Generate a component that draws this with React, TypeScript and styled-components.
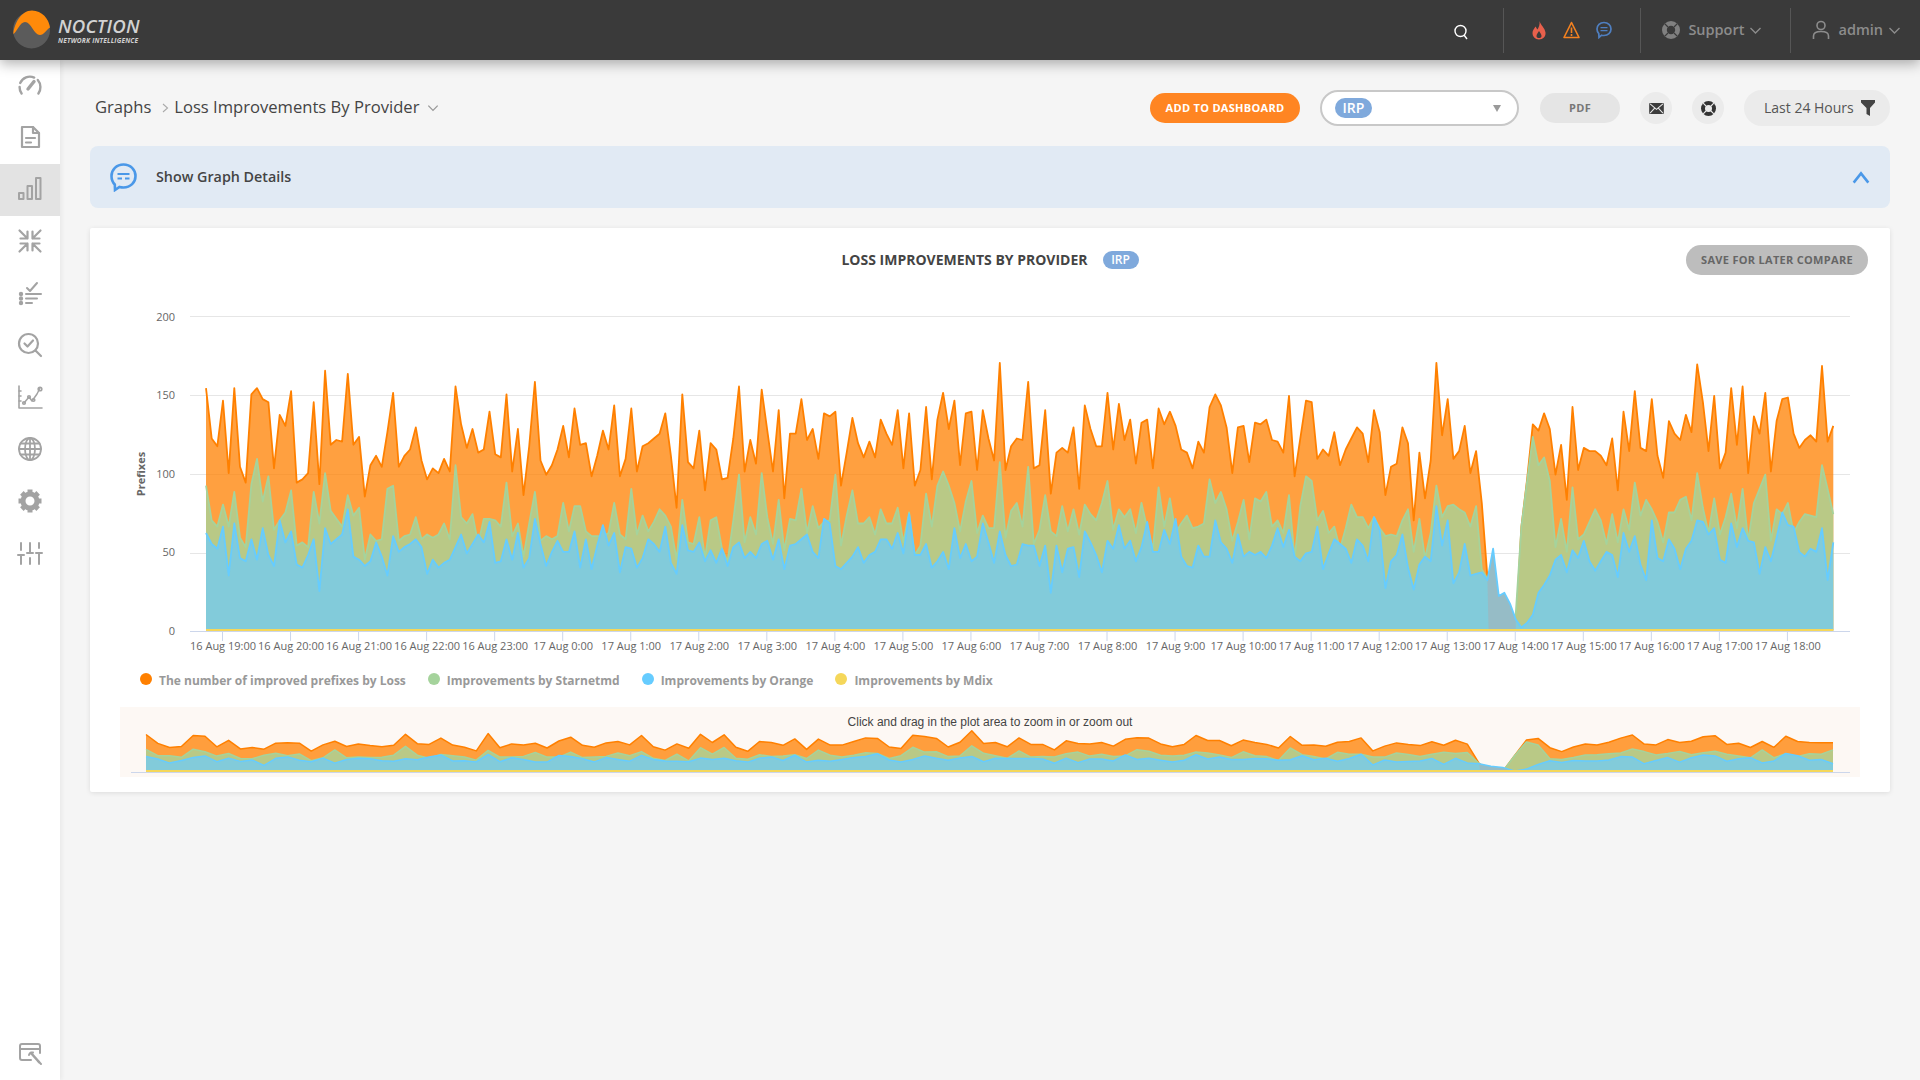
import React from 'react';
import styled, { createGlobalStyle } from 'styled-components';

const GlobalStyle = createGlobalStyle`
  html, body { margin: 0; padding: 0; background: #f5f5f5; }
  body { font-family: "Open Sans", "Liberation Sans", sans-serif; color: #444; }
  * { box-sizing: border-box; }
`;

// chart data, one value per 5 minutes
const lossData = [
  154,122,117,146,100,154,104,94,150,154,147,145,103,137,130,152,94,96,100,145,
  93,165,118,121,120,163,118,123,85,105,111,104,126,151,104,111,115,129,108,96,
  103,100,109,101,155,131,116,128,113,115,139,112,110,150,101,128,86,117,158,108,
  99,105,115,130,110,141,118,119,98,111,127,115,143,98,109,141,101,117,119,122,
  125,138,111,78,150,107,103,127,89,119,115,
  96,97,122,155,101,121,106,153,127,101,140,84,125,125,147,121,128,109,138,136,
  139,92,113,135,119,110,120,110,134,125,118,140,103,138,92,102,142,96,134,151,
  128,146,105,138,139,102,140,122,108,170,102,117,122,121,158,103,105,140,87,113,
  116,113,129,90,143,128,117,117,151,115,144,121,134,106,132,134,103,141,131,139,
  130,115,113,103,120,113,142,150,143,129,100,129,130,107,132,131,134,121,120,113,
  149,98,122,146,145,109,
  115,111,126,105,115,122,129,125,107,140,126,86,104,106,129,119,70,113,84,108,
  170,124,147,109,114,130,100,114,81,34,0,0,0,0,0,66,96,131,127,138,
  128,99,118,83,142,102,116,114,114,111,105,122,89,139,114,152,116,114,147,111,
  97,133,125,121,137,126,169,145,114,149,103,113,154,118,155,100,136,125,151,101,
  133,147,148,125,116,121,124,120,168,120,130,
];
const starnetData = [
  92,70,66,80,66,88,59,53,93,109,82,98,64,70,75,89,54,56,53,88,
  68,100,76,71,66,86,73,78,45,61,57,58,90,92,57,60,61,72,58,61,
  59,61,68,58,105,72,68,74,55,71,71,70,66,94,60,68,47,68,88,57,
  60,58,60,81,63,79,79,63,60,60,60,62,81,61,58,90,61,73,63,69,
  77,73,66,45,83,56,55,72,46,70,72,
  52,44,70,99,56,72,61,100,72,55,83,51,71,70,90,62,79,65,69,70,
  99,54,73,89,68,68,72,61,77,68,68,78,56,75,48,54,87,66,92,101,
  92,81,63,82,95,62,73,65,65,107,59,76,81,66,104,55,64,86,63,60,
  79,63,77,61,80,74,70,81,95,64,77,72,77,62,81,65,52,91,66,84,
  62,68,73,65,66,68,96,81,88,77,57,69,83,58,84,82,88,66,70,62,
  86,46,79,98,95,70,
  76,62,66,52,65,80,72,72,65,72,65,60,61,60,70,77,50,71,46,62,
  92,72,79,80,77,75,66,79,39,33,0,0,0,0,11,66,95,123,105,110,
  95,53,71,50,91,58,61,69,77,70,55,74,56,77,64,94,73,83,77,69,
  56,75,75,83,85,70,100,78,62,84,61,72,87,65,90,57,81,90,99,57,
  77,74,81,62,69,74,73,72,105,90,74,
];
const orangeData = [
  62,55,52,66,35,68,46,44,58,45,65,48,41,70,56,63,42,40,48,58,
  25,65,55,58,61,77,47,45,41,44,56,47,35,60,50,53,55,58,53,36,
  45,40,43,45,53,61,49,55,61,56,69,43,44,58,45,62,40,46,71,55,
  41,50,57,50,50,63,40,58,39,54,67,54,62,37,53,52,40,46,58,55,
  50,66,43,36,67,51,50,56,44,51,43,
  52,41,53,56,46,50,46,55,57,45,58,39,54,55,58,61,50,46,71,68,
  41,39,43,47,53,43,48,50,58,58,52,62,49,74,48,48,55,40,44,50,
  39,65,46,55,44,47,68,56,43,63,48,41,42,55,54,54,41,54,24,54,
  37,52,53,34,63,56,48,37,57,52,67,52,57,44,53,69,50,50,64,55,
  71,47,41,40,54,47,47,70,56,52,43,61,47,50,48,50,46,54,65,53,
  64,47,44,49,50,66,
  39,49,58,55,52,43,58,54,44,72,64,27,44,48,61,40,26,42,47,44,
  79,54,70,30,37,55,35,36,37,32,52,22,24,17,7,2,5,10,24,29,
  35,45,48,37,51,46,57,44,38,44,50,48,34,62,50,60,42,32,70,46,
  44,58,52,39,52,57,70,69,61,65,45,43,68,53,65,57,56,36,53,44,
  59,75,67,66,50,47,52,50,65,32,56,
];

const hourLabels = [
  '16 Aug 19:00','16 Aug 20:00','16 Aug 21:00','16 Aug 22:00','16 Aug 23:00','17 Aug 0:00','17 Aug 1:00','17 Aug 2:00',
  '17 Aug 3:00','17 Aug 4:00','17 Aug 5:00','17 Aug 6:00','17 Aug 7:00','17 Aug 8:00','17 Aug 9:00','17 Aug 10:00',
  '17 Aug 11:00','17 Aug 12:00','17 Aug 13:00','17 Aug 14:00','17 Aug 15:00','17 Aug 16:00','17 Aug 17:00','17 Aug 18:00',
];

const legendItems = [
  { label: 'The number of improved prefixes by Loss', color: '#ff8000' },
  { label: 'Improvements by Starnetmd', color: '#a5d39c' },
  { label: 'Improvements by Orange', color: '#66ccff' },
  { label: 'Improvements by Mdix', color: '#f5d75a' },
];

const line = (vals: number[], xf: (i: number) => number, yf: (v: number) => number) =>
  vals.map((v, i) => `${i === 0 ? 'M' : 'L'}${xf(i).toFixed(1)} ${yf(v).toFixed(1)}`).join(' ');

const area = (vals: number[], xf: (i: number) => number, yf: (v: number) => number) =>
  `${line(vals, xf, yf)} L${xf(vals.length - 1).toFixed(1)} ${yf(0)} L${xf(0).toFixed(1)} ${yf(0)} Z`;

// the navigator only shows every second point
const thin = (vals: number[]) => vals.filter((_, i) => i % 2 === 0);

function Series({ xf, yf, loss, starnet, orange, stroke, step }: {
  xf: (i: number) => number;
  yf: (v: number) => number;
  loss: number[];
  starnet: number[];
  orange: number[];
  stroke: number;
  step: number;
}) {
  // the part of the Orange series where nothing lies under it comes out greyer
  const from = Math.floor(226 / step);
  const to = Math.ceil(231 / step);
  const notch = [`M${xf(from + 0.2 / step).toFixed(1)} ${yf(0)}`, `L${xf(from).toFixed(1)} ${yf(orange[from])}`];
  for (let i = from + 1; i <= to; i++) notch.push(`L${xf(i).toFixed(1)} ${yf(orange[i])}`);
  notch.push(`L${xf(to).toFixed(1)} ${yf(0)} Z`);
  return (
    <g strokeLinejoin="round">
      <path d={area(loss, xf, yf)} fill="#ff8000" fillOpacity={0.75} />
      <path d={line(loss, xf, yf)} fill="none" stroke="#ff8000" strokeWidth={stroke} />
      <path d={area(starnet, xf, yf)} fill="#b9c986" />
      <path d={line(starnet, xf, yf)} fill="none" stroke="#a5d39c" strokeWidth={stroke} />
      <path d={area(orange, xf, yf)} fill="#82cbda" />
      <path d={notch.join(' ')} fill="#96bcc6" />
      <path d={line(orange, xf, yf)} fill="none" stroke="#66ccff" strokeWidth={stroke} />
      <path d={`M${xf(0)} ${yf(0) - 0.5} L${xf(loss.length - 1)} ${yf(0) - 0.5}`} stroke="#f5d75a" strokeWidth={2} />
    </g>
  );
}

const Page = styled.div`
  display: flex;
  flex-direction: column;
  width: 100%;
  height: 1080px;
  overflow: hidden;
`;

const TopBar = styled.header`
  position: relative;
  z-index: 2;
  flex: 0 0 60px;
  display: flex;
  align-items: center;
  padding-left: 13px;
  background: #3a3a3a;
  box-shadow: 0 4px 12px rgba(0, 0, 0, 0.3);
`;

const LogoText = styled.div`
  display: flex;
  flex-direction: column;
  margin-left: 7px;
  font-style: italic;
  color: #d2d2d2;
`;

const LogoName = styled.span`
  font-size: 18.6px;
  line-height: 20px;
  font-weight: 600;
  letter-spacing: 0.2px;
`;

const LogoSub = styled.span`
  font-size: 6.6px;
  line-height: 9px;
  font-weight: 700;
  letter-spacing: 0.2px;
  white-space: nowrap;
`;

const TopRight = styled.div`
  margin-left: auto;
  display: flex;
  align-items: center;
  height: 100%;
`;

const SearchSlot = styled.div`
  display: flex;
  align-items: center;
  padding-top: 4px;
  margin-right: 34px;
`;

const TopDivider = styled.div`
  width: 1px;
  height: 45px;
  background: #565656;
`;

const AlertGroup = styled.div`
  display: flex;
  align-items: center;
  gap: 16px;
  padding: 0 28px 0 27px;
`;

const TopMenu = styled.div<{ $end: number }>`
  display: flex;
  align-items: center;
  padding: 0 ${p => p.$end}px 0 21px;
  color: #8c8c8c;
  font-size: 14.5px;
  font-weight: 600;
`;

const TopMenuLabel = styled.span`
  margin: 0 4px 2px 8px;
`;

const Body = styled.div`
  flex: 1;
  display: flex;
  min-height: 0;
`;

const SideNav = styled.nav`
  flex: 0 0 60px;
  display: flex;
  flex-direction: column;
  background: #fff;
  box-shadow: 2px 0 4px rgba(0, 0, 0, 0.05);
`;

const SideItem = styled.div<{ $active?: boolean; $bottom?: boolean }>`
  flex: 0 0 52px;
  display: flex;
  align-items: center;
  justify-content: center;
  padding-bottom: 2px;
  color: #a3a3a3;
  background: ${p => (p.$active ? '#e3e3e3' : 'transparent')};
  margin-top: ${p => (p.$bottom ? 'auto' : '0')};
`;

const Main = styled.main`
  flex: 1;
  min-width: 0;
  padding: 30px 30px 0;
`;

const ToolRow = styled.div`
  display: flex;
  align-items: center;
  height: 36px;
`;

const Crumbs = styled.div`
  display: flex;
  align-items: center;
  margin-left: 5px;
  margin-right: auto;
  padding-bottom: 4px;
  font-size: 16.6px;
  color: #444;
`;

const CrumbArrow = styled.span`
  display: flex;
  margin: 3px 3px 0 8px;
  color: #aaa;
`;

const CrumbDown = styled.span`
  display: flex;
  margin: 4px 0 0 7px;
  color: #999;
`;

const AddButton = styled.button`
  width: 150px;
  height: 30px;
  padding: 0 0 2px;
  border: 0;
  border-radius: 15px;
  background: #ff8522;
  color: #fff;
  font: 700 11px "Open Sans", sans-serif;
  letter-spacing: 0.3px;
`;

const SelectBox = styled.div`
  position: relative;
  width: 199px;
  height: 36px;
  margin-left: 20px;
  display: flex;
  align-items: center;
  padding-left: 13px;
  background: #fff;
  border: 2px solid #c8c8c8;
  border-radius: 18px;
`;

const IrpBadge = styled.span<{ $small?: boolean }>`
  display: inline-flex;
  align-items: center;
  justify-content: center;
  width: ${p => (p.$small ? '36px' : '37px')};
  height: ${p => (p.$small ? '18px' : '20px')};
  padding-bottom: 1px;
  border-radius: 10px;
  background: #7fa9dc;
  color: #fff;
  font-size: ${p => (p.$small ? '12px' : '14px')};
  font-weight: 600;
`;

const SelectCaret = styled.span`
  margin-left: auto;
  margin-right: 16px;
  width: 0;
  height: 0;
  border-left: 4px solid transparent;
  border-right: 4px solid transparent;
  border-top: 7px solid #9a9a9a;
`;

const PdfButton = styled.button`
  width: 80px;
  height: 30px;
  margin-left: 21px;
  padding: 0 0 2px;
  border: 0;
  border-radius: 15px;
  background: #e5e5e5;
  color: #777;
  font: 700 11px "Open Sans", sans-serif;
  letter-spacing: 0.3px;
`;

const RoundButton = styled.div`
  display: flex;
  align-items: center;
  justify-content: center;
  width: 32px;
  height: 32px;
  margin-left: 20px;
  border-radius: 50%;
  background: #ebebeb;
`;

const RangeButton = styled.div`
  display: flex;
  align-items: center;
  justify-content: space-between;
  width: 146px;
  height: 36px;
  margin-left: 20px;
  padding: 0 15px 0 20px;
  border-radius: 18px;
  background: #ebebeb;
  color: #555;
  font-size: 14px;
`;

const RangeLabel = styled.span`
  margin-bottom: 2px;
`;

const Banner = styled.div`
  display: flex;
  align-items: center;
  height: 62px;
  margin-top: 20px;
  padding: 0 20px;
  border-radius: 8px;
  background: #e1eaf4;
`;

const BannerText = styled.span`
  margin: 0 0 2px 19px;
  font-size: 14.3px;
  font-weight: 600;
  color: #444;
`;

const BannerChevron = styled.span`
  display: flex;
  margin: 1px -2px 0 auto;
  color: #4a98e8;
`;

const Card = styled.section`
  height: 564px;
  margin-top: 20px;
  padding-top: 17px;
  background: #fff;
  border-radius: 2px;
  box-shadow: 0 1px 5px rgba(0, 0, 0, 0.1);
`;

const CardHead = styled.div`
  display: grid;
  grid-template-columns: 1fr auto 1fr;
  align-items: center;
  height: 30px;
  padding: 0 22px;
`;

const CardTitle = styled.div`
  grid-column: 2;
  display: flex;
  align-items: center;
  gap: 15px;
  font-size: 14px;
  font-weight: 700;
  color: #444;
`;

const TitleText = styled.span`
  margin-bottom: 2px;
`;

const SaveButton = styled.button`
  justify-self: end;
  width: 182px;
  height: 30px;
  padding: 0 0 2px;
  border: 0;
  border-radius: 15px;
  background: #bdbdbd;
  color: #666;
  font: 700 11px "Open Sans", sans-serif;
  letter-spacing: 0.3px;
`;

const ChartSvg = styled.svg`
  display: block;
  width: 1800px;
  height: 385px;
  font-family: "Open Sans", sans-serif;
`;

const Legend = styled.div`
  display: flex;
  align-items: center;
  gap: 22px;
  height: 40px;
  padding-left: 50px;
`;

const LegendItem = styled.div`
  display: flex;
  align-items: center;
  gap: 7px;
  font-size: 12px;
  font-weight: 700;
  color: #999;
`;

const LegendDot = styled.span<{ $color: string }>`
  width: 12px;
  height: 12px;
  margin-top: -2px;
  border-radius: 50%;
  background: ${p => p.$color};
`;

const Navigator = styled.div`
  height: 70px;
  margin: 7px 30px 0;
  background: #fdf8f4;
`;

const NavSvg = styled.svg`
  display: block;
  width: 1740px;
  height: 70px;
`;

type IconProps = { size?: number };

const Ico = ({ size = 26, children, sw = 2 }: { size?: number; children: React.ReactNode; sw?: number }) => (
  <svg width={size} height={size} viewBox="0 0 26 26" fill="none" stroke="currentColor" strokeWidth={sw} strokeLinecap="round" strokeLinejoin="round">
    {children}
  </svg>
);

const GaugeIcon = () => (
  <Ico sw={2.4}>
    <path d="M4.6 21.5 A10.5 10.5 0 0 1 2.6 15" />
    <path d="M3.2 11 A10.5 10.5 0 0 1 17.2 5.6" />
    <path d="M20.8 8 A10.5 10.5 0 0 1 23.4 15 A10.5 10.5 0 0 1 21.4 21.5" />
    <path d="M11 17 L17 9.5" strokeWidth={3.4} />
  </Ico>
);
const DocIcon = () => (
  <Ico sw={2.2}>
    <path d="M5 3 H16 L22 9 V23 H5 Z" />
    <path d="M16 3 V9 H22" />
    <path d="M9 14 H18 M9 18.5 H14" />
  </Ico>
);
const BarsIcon = () => (
  <Ico>
    <rect x="2" y="17" width="4.5" height="6" />
    <rect x="10.5" y="10" width="4.5" height="13" />
    <rect x="19" y="2" width="4.5" height="21" />
  </Ico>
);
const CompressIcon = () => (
  <Ico sw={2.2}>
    <path d="M2.5 2.5 L10.5 10.5 M10.5 3.5 V10.5 H3.5" />
    <path d="M23.5 2.5 L15.5 10.5 M15.5 3.5 V10.5 H22.5" />
    <path d="M2.5 23.5 L10.5 15.5 M10.5 22.5 V15.5 H3.5" />
    <path d="M23.5 23.5 L15.5 15.5 M15.5 22.5 V15.5 H22.5" />
  </Ico>
);
const ListCheckIcon = () => (
  <Ico sw={2}>
    <path d="M10 8 L13 11 L20 3" />
    <path d="M9 14 H24 M9 18.5 H20 M9 23 H15" />
    <circle cx="4" cy="14" r="1.2" fill="currentColor" />
    <circle cx="4" cy="18.5" r="1.2" fill="currentColor" />
    <circle cx="4" cy="23" r="1.2" fill="currentColor" />
  </Ico>
);
const SearchCheckIcon = () => (
  <Ico sw={2.2}>
    <circle cx="11.5" cy="11.5" r="9.5" />
    <path d="M7.5 11.5 L10.5 14.5 L16 8.5" />
    <path d="M18.5 18.5 L24 24" />
  </Ico>
);
const LineChartIcon = () => (
  <Ico sw={1.6}>
    <path d="M2 2 V24 H25" />
    <path d="M2 7 H4 M2 12 H4 M2 17 H4" />
    <path d="M7 19 L12 13 L15 17 L20 10 L23 4" strokeWidth={1.5} />
    <circle cx="7" cy="19" r="1.3" />
    <circle cx="12" cy="13" r="1.3" />
    <circle cx="16.5" cy="16" r="1.3" />
    <circle cx="23" cy="5" r="1.8" />
  </Ico>
);
const GlobeIcon = () => (
  <Ico sw={1.8}>
    <circle cx="13" cy="13" r="11" />
    <ellipse cx="13" cy="13" rx="5" ry="11" />
    <path d="M13 2 V24 M2 13 H24 M3.5 7.5 H22.5 M3.5 18.5 H22.5" />
  </Ico>
);
const GearIcon = () => (
  <Ico sw={5}>
    <circle cx="13" cy="13" r="7" />
    {[0, 45, 90, 135, 180, 225, 270, 315].map(a => (
      <rect key={a} x="10.5" y="1.5" width="5" height="4" fill="currentColor" stroke="none" transform={`rotate(${a} 13 13)`} />
    ))}
  </Ico>
);
const SlidersIcon = () => (
  <Ico sw={2}>
    <path d="M4 3 V10 M4 15 V24 M13 3 V13 M13 18 V24 M22 3 V8 M22 13 V24" />
    <path d="M1 15 H7 M10 13 H16 M19 13 H25" />
  </Ico>
);
const ToolWindowIcon = () => (
  <Ico sw={2}>
    <path d="M14 20 H5 Q3 20 3 18 V6 Q3 4 5 4 H21 Q23 4 23 6 V13" />
    <path d="M3 9 H23" />
    <path d="M14 13 L22 22" strokeWidth={2.6} />
    <path d="M12 15 Q13 12 16 12.5 M21 21 L24 24" />
  </Ico>
);

const Chev = ({ size = 12, dir = 'down', sw = 1.1 }: IconProps & { dir?: 'down' | 'up' | 'right'; sw?: number }) => {
  const d = dir === 'down' ? 'M2 4 L6 8 L10 4' : dir === 'up' ? 'M2 8.5 L6 3.5 L10 8.5' : 'M4 2 L8.5 6 L4 10';
  return (
    <svg width={size} height={size} viewBox="0 0 12 12" fill="none" stroke="currentColor" strokeWidth={sw}>
      <path d={d} />
    </svg>
  );
};

const Lifesaver = ({ size, color, hole }: { size: number; color: string; hole: string }) => (
  <svg width={size} height={size} viewBox="0 0 18 18">
    <circle cx="9" cy="9" r="9" fill={color} />
    <circle cx="9" cy="9" r="4.2" fill={hole} />
    <path d="M2.6 2.6 L6 6 M15.4 2.6 L12 6 M2.6 15.4 L6 12 M15.4 15.4 L12 12" stroke={hole} strokeWidth="1.3" />
  </svg>
);

function App() {
  const chartX = (i: number) => 206 + 5.67 * i;
  const chartY = (v: number) => 630.6 - v * 1.575;
  const navLoss = thin(lossData);
  const navStarnet = thin(starnetData);
  const navOrange = thin(orangeData);
  const navX = (i: number) => 146 + (1687 / (navLoss.length - 1)) * i;
  const navY = (v: number) => 771.5 - v * 0.24;

  return (
    <Page>
      <GlobalStyle />
      <TopBar>
        <svg width="38" height="40" viewBox="0 0 38 40">
          <circle cx="18.5" cy="20" r="18.5" fill="#5b5b5b" />
          <path d="M0.3 24 C1 14 8 0.4 19 0.4 C29 0.4 36 9 37 17.5 C33 20 31 25 27 25 C21 25 18 12 12 12 C7 12 4 22 0.3 24 Z" fill="#ff8a0a" />
        </svg>
        <LogoText>
          <LogoName>NOCTION</LogoName>
          <LogoSub>NETWORK INTELLIGENCE</LogoSub>
        </LogoText>
        <TopRight>
          <SearchSlot>
            <svg width="16" height="16" viewBox="0 0 16 16" fill="none" stroke="#fff" strokeWidth="1.4">
              <circle cx="7.5" cy="7" r="5.5" />
              <path d="M11 11 L14 15" />
            </svg>
          </SearchSlot>
          <TopDivider />
          <AlertGroup>
            <svg width="16" height="20" viewBox="0 0 16 20">
              <path fill="#e8604c" fillRule="evenodd" d="M8.5 1 C9.5 5 14 8 14.5 12.5 C15 16.5 12 19.5 8 19.5 C4 19.5 1.5 16.5 1.5 13 C1.5 10.5 3 9 4.5 6.5 C5.5 8 6 9 6.5 9.5 C8 7 9 4 8.5 1 Z M8 11 C7 13 5.5 14 5.5 16 C5.5 17.5 6.5 18 8 18 C9.5 18 10.5 17.5 10.5 16 C10.5 14 9 13 8 11 Z" />
            </svg>
            <svg width="17" height="18" viewBox="0 0 17 18" fill="none" stroke="#f58220" strokeWidth="1.6" strokeLinejoin="round">
              <path d="M8.5 1.5 L16 16.5 H1 Z" />
              <path d="M8.5 6.5 V12 M8.5 13 V15" />
            </svg>
            <svg width="16" height="18" viewBox="0 0 16 18" fill="none" stroke="#4f7fc0" strokeWidth="1.7">
              <path d="M8 1.5 C12 1.5 15 4.2 15 8 C15 11.8 12 14.5 8 14.5 C7 14.5 6.3 14.4 5.6 14.2 L3 16.5 L2.8 12.6 C1.7 11.5 1 9.9 1 8 C1 4.2 4 1.5 8 1.5 Z" />
              <path d="M4.5 6.6 H11.5 M4.5 9.6 H11.5" strokeWidth="1.2" />
            </svg>
          </AlertGroup>
          <TopDivider />
          <TopMenu $end={27}>
            <Lifesaver size={18} color="#808080" hole="#3a3a3a" />
            <TopMenuLabel>Support</TopMenuLabel>
            <Chev size={15} />
          </TopMenu>
          <TopDivider />
          <TopMenu $end={18}>
            <svg width="18" height="20" viewBox="0 0 18 20" fill="none" stroke="#8c8c8c" strokeWidth="1.6">
              <circle cx="9" cy="5.5" r="4" />
              <path d="M1.5 19 V16 C1.5 13 4 11.5 9 11.5 C14 11.5 16.5 13 16.5 16 V19" />
            </svg>
            <TopMenuLabel>admin</TopMenuLabel>
            <Chev size={15} />
          </TopMenu>
        </TopRight>
      </TopBar>

      <Body>
        <SideNav>
          <SideItem><GaugeIcon /></SideItem>
          <SideItem><DocIcon /></SideItem>
          <SideItem $active><BarsIcon /></SideItem>
          <SideItem><CompressIcon /></SideItem>
          <SideItem><ListCheckIcon /></SideItem>
          <SideItem><SearchCheckIcon /></SideItem>
          <SideItem><LineChartIcon /></SideItem>
          <SideItem><GlobeIcon /></SideItem>
          <SideItem><GearIcon /></SideItem>
          <SideItem><SlidersIcon /></SideItem>
          <SideItem $bottom><ToolWindowIcon /></SideItem>
        </SideNav>

        <Main>
          <ToolRow>
            <Crumbs>
              Graphs
              <CrumbArrow><Chev size={12} dir="right" /></CrumbArrow>
              Loss Improvements By Provider
              <CrumbDown><Chev size={14} /></CrumbDown>
            </Crumbs>
            <AddButton>ADD TO DASHBOARD</AddButton>
            <SelectBox>
              <IrpBadge>IRP</IrpBadge>
              <SelectCaret />
            </SelectBox>
            <PdfButton>PDF</PdfButton>
            <RoundButton>
              <svg width="15" height="11" viewBox="0 0 16 12">
                <rect width="16" height="12" rx="1" fill="#3c3c3c" />
                <path d="M1 1 L8 7 L15 1 M1 11 L6 5.5 M15 11 L10 5.5" fill="none" stroke="#ebebeb" strokeWidth="1.1" />
              </svg>
            </RoundButton>
            <RoundButton><Lifesaver size={15} color="#333" hole="#ebebeb" /></RoundButton>
            <RangeButton>
              <RangeLabel>Last 24 Hours</RangeLabel>
              <svg width="14" height="16" viewBox="0 0 14 16">
                <path d="M0 0 H14 V2.5 L9 8 V16 L5.5 14 V8 L0 2.5 Z" fill="#444" />
              </svg>
            </RangeButton>
          </ToolRow>

          <Banner>
            <svg width="27" height="29" viewBox="0 0 27 29" fill="none" stroke="#4a98e8" strokeWidth="2.6">
              <path d="M13.5 1.5 C20.5 1.5 25.5 6.5 25.5 13 C25.5 19.5 20.5 24.5 13.5 24.5 C12 24.5 11 24.4 9.5 24 L5 27 L4.8 21.5 C2.7 19.5 1.5 16.5 1.5 13 C1.5 6.5 6.5 1.5 13.5 1.5 Z" />
              <path d="M7.5 11 H19.5 M7.5 15.5 H12 M15 15.5 H19.5" strokeWidth="1.8" />
            </svg>
            <BannerText>Show Graph Details</BannerText>
            <BannerChevron><Chev size={22} dir="up" sw={1.4} /></BannerChevron>
          </Banner>

          <Card>
            <CardHead>
              <CardTitle>
                <TitleText>LOSS IMPROVEMENTS BY PROVIDER</TitleText>
                <IrpBadge $small>IRP</IrpBadge>
              </CardTitle>
              <SaveButton>SAVE FOR LATER COMPARE</SaveButton>
            </CardHead>

            <ChartSvg viewBox="90 275 1800 385">
              {[[200, 316], [150, 395], [100, 474], [50, 553]].map(([v, y]) => (
                <line key={v} x1="190" x2="1850" y1={y + 0.5} y2={y + 0.5} stroke="#e6e6e6" />
              ))}
              {[[200, 317], [150, 395], [100, 474], [50, 552], [0, 631]].map(([v, y]) => (
                <text key={v} x="175" y={y + 4} textAnchor="end" fontSize="11" fill="#666">{v}</text>
              ))}
              <text transform="translate(145 474) rotate(-90)" textAnchor="middle" fontSize="11" fontWeight="700" fill="#666">Prefixes</text>
              <Series xf={chartX} yf={chartY} loss={lossData} starnet={starnetData} orange={orangeData} stroke={1.8} step={1} />
              <line x1="190" x2="1850" y1="631.5" y2="631.5" stroke="#ccd6eb" />
              {hourLabels.map((t, i) => (
                <g key={t}>
                  <line x1={222.5 + 68.04 * i} x2={222.5 + 68.04 * i} y1="631" y2="641" stroke="#ccd6eb" />
                  <text x={223 + 68.04 * i} y="650" textAnchor="middle" fontSize="11" fill="#666">{t}</text>
                </g>
              ))}
            </ChartSvg>

            <Legend>
              {legendItems.map(item => (
                <LegendItem key={item.label}>
                  <LegendDot $color={item.color} />
                  {item.label}
                </LegendItem>
              ))}
            </Legend>

            <Navigator>
              <NavSvg viewBox="120 707 1740 70">
                <text x="990" y="726" textAnchor="middle" fontSize="12" fill="#444" fontFamily="'Liberation Sans', sans-serif">
                  Click and drag in the plot area to zoom in or zoom out
                </text>
                <Series xf={navX} yf={navY} loss={navLoss} starnet={navStarnet} orange={navOrange} stroke={1.5} step={2} />
                <line x1="131" x2="1850" y1="772.5" y2="772.5" stroke="#ccd6eb" />
              </NavSvg>
            </Navigator>
          </Card>
        </Main>
      </Body>
    </Page>
  );
}

export default App;
